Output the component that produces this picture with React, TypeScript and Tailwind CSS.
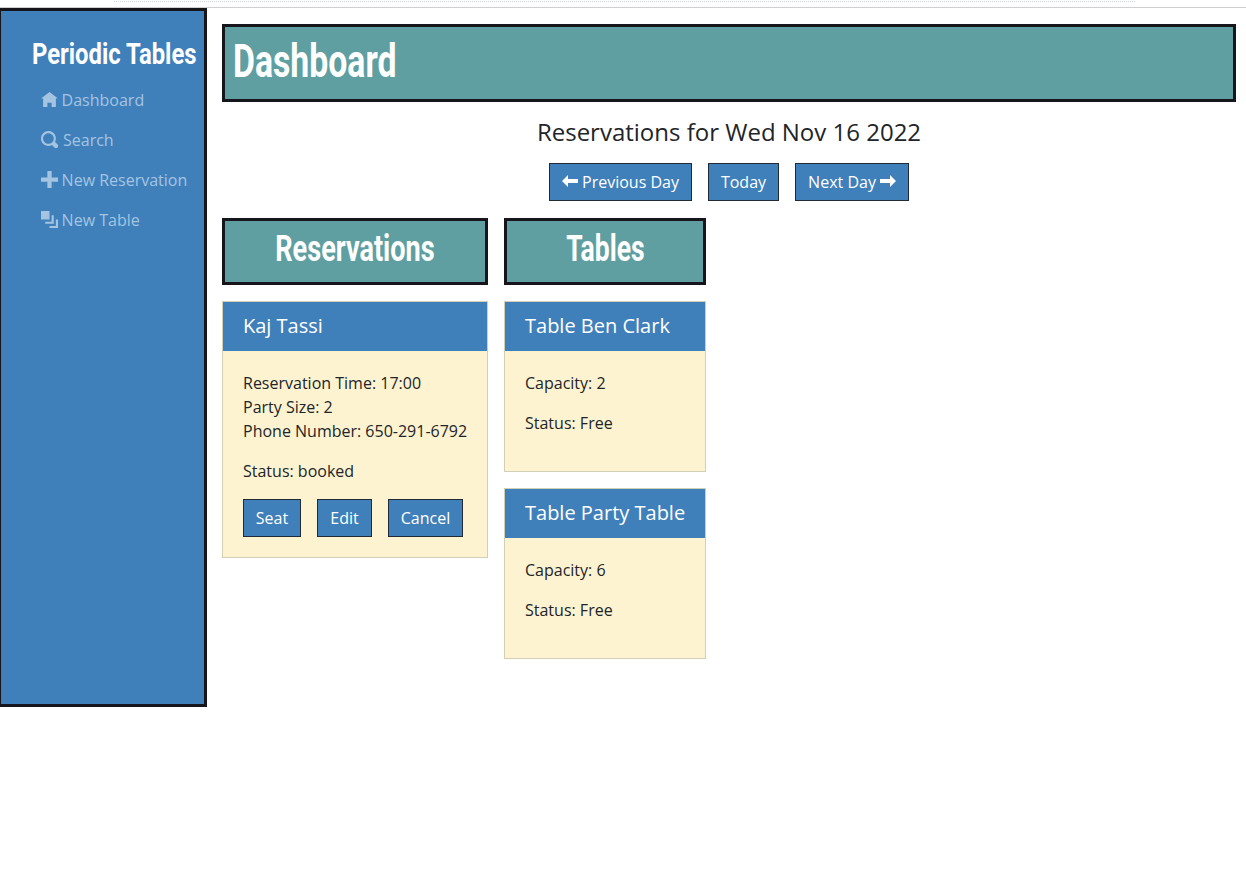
import React from "react";

const icons = {
  home: "M4 .5l-4 3h1v4h2v-2h2v2h2v-4.03l1 .03-4-3z",
  search:
    "M3.5 0c-1.93 0-3.5 1.57-3.5 3.5s1.57 3.5 3.5 3.5c.59 0 1.17-.14 1.66-.41a1 1 0 0 0 .13.13l1 1a1.02 1.02 0 1 0 1.44-1.44l-1-1a1 1 0 0 0-.16-.13c.27-.49.44-1.06.44-1.66 0-1.93-1.55-3.5-3.5-3.5zm0 1c1.39 0 2.5 1.11 2.5 2.5 0 .66-.24 1.27-.66 1.72l-.03.03a1 1 0 0 0-.13.13c-.44.4-1.04.63-1.69.63-1.39 0-2.5-1.11-2.5-2.5s1.11-2.5 2.5-2.5z",
  plus: "M3 0v3h-3v2h3v3h2v-3h3v-2h-3v-3h-2z",
  layers: "M0 0v4h4v-4h-4zm5 2v3h-3v1h4v-4h-1zm2 2v3h-3v1h4v-4h-1z",
  left: "M3 1l-3 3.03 3 2.97v-2h5v-2h-5v-2z",
  right: "M5 1v2h-5v2h5v2l3-2.97-3-3.03z",
};

function Icon({ name, className = "size-[17px]" }: { name: keyof typeof icons; className?: string }) {
  return (
    <svg viewBox="0 0 8 8" fill="currentColor" className={`mb-0.5 shrink-0 ${className}`}>
      <path d={icons[name]} />
    </svg>
  );
}

function NavItem({ icon, label, gap = "gap-[3.6px]" }: { icon: keyof typeof icons; label: string; gap?: string }) {
  return (
    <a className={`flex h-10 items-center pl-10 text-[#a5c4e1] ${gap}`}>
      <Icon name={icon} />
      <span className="whitespace-nowrap">{label}</span>
    </a>
  );
}

function Button({ children, width }: { children: React.ReactNode; width: string }) {
  return (
    <button className={`flex h-[38px] items-center justify-center gap-1 whitespace-nowrap border border-[#212b35] bg-[#3f80bb] text-white ${width}`}>
      {children}
    </button>
  );
}

function ColumnTitle({ children }: { children: React.ReactNode }) {
  return (
    <h2 className="flex h-[67px] items-center justify-center border-3 border-[#15151b] bg-[#5f9fa1] pb-[5px] font-[Roboto] text-[36px] font-bold leading-none text-white">
      {children}
    </h2>
  );
}

function Card({ title, height, children }: { title: string; height: string; children: React.ReactNode }) {
  return (
    <section className={`mt-4 border border-[#d3cfb5] bg-[#fef3d0] ${height}`}>
      <h5 className="flex h-[49px] items-center whitespace-nowrap bg-[#3f80bb] px-5 pb-0.5 text-xl text-white">{title}</h5>
      <div className="px-5 pt-5">{children}</div>
    </section>
  );
}

export default function App() {
  return (
    <div className="h-[873px] overflow-hidden bg-white font-['Open_Sans',sans-serif] text-base text-[#212529]">
      <div className="flex h-2 flex-col justify-between border-b border-[#cfcfd3] pt-px">
        <div className="ml-[114px] w-[1021px] border-t border-dotted border-[#c8d5da]" />
      </div>
      <div className="flex">
        <aside className="h-[699px] w-[207px] shrink-0 border-3 border-l border-[#15151b] bg-[#3f80bb]">
          <div className="flex h-[69px] items-center pl-[31px] pt-[17px] font-[Roboto] text-[30px] font-bold leading-none text-white">
            <span className="origin-left scale-x-[0.794] whitespace-nowrap">Periodic Tables</span>
          </div>
          <nav>
            <NavItem icon="home" label="Dashboard" />
            <NavItem icon="search" label="Search" gap="gap-[5px]" />
            <NavItem icon="plus" label="New Reservation" />
            <NavItem icon="layers" label="New Table" />
          </nav>
        </aside>
        <main className="ml-[15px] w-[1014px] pt-4">
          <h1 className="flex h-[78px] items-center border-3 border-[#15151b] bg-[#5f9fa1] pb-[5px] pl-2 font-[Roboto] text-[46px] font-bold leading-none text-white">
            <span className="origin-left scale-x-[0.734]">Dashboard</span>
          </h1>
          <h4 className="mt-[15px] h-[30px] text-center text-2xl leading-[29px]">Reservations for Wed Nov 16 2022</h4>
          <div className="mt-4 flex justify-center gap-4">
            <Button width="w-[143px]">
              <Icon name="left" className="size-4" />
              <span>Previous Day</span>
            </Button>
            <Button width="w-[71px]">Today</Button>
            <Button width="w-[114px]">
              <span>Next Day</span>
              <Icon name="right" className="size-4" />
            </Button>
          </div>
          <div className="mt-[17px] flex items-start gap-4">
            <div className="w-[266px]">
              <ColumnTitle>
                <span className="scale-x-[0.752]">Reservations</span>
              </ColumnTitle>
              <Card title="Kaj Tassi" height="h-[257px]">
                <p className="whitespace-nowrap">
                  Reservation Time: 17:00
                  <br />
                  Party Size: 2
                  <br />
                  Phone Number: 650-291-6792
                </p>
                <p className="mt-4">Status: booked</p>
                <div className="mt-4 flex gap-4">
                  <Button width="w-[58px]">Seat</Button>
                  <Button width="w-[55px]">Edit</Button>
                  <Button width="w-[75px]">Cancel</Button>
                </div>
              </Card>
            </div>
            <div className="w-[202px]">
              <ColumnTitle>
                <span className="scale-x-[0.735]">Tables</span>
              </ColumnTitle>
              <Card title="Table Ben Clark" height="h-[171px]">
                <p>Capacity: 2</p>
                <p className="mt-4">Status: Free</p>
              </Card>
              <Card title="Table Party Table" height="h-[171px]">
                <p>Capacity: 6</p>
                <p className="mt-4">Status: Free</p>
              </Card>
            </div>
          </div>
        </main>
      </div>
    </div>
  );
}
